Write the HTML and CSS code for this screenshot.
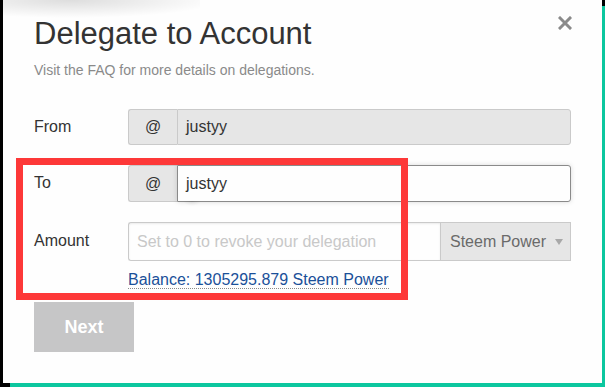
FILE: index.html
```html
<!DOCTYPE html>
<html>
<head>
<meta charset="utf-8">
<link rel="stylesheet" href="styles.css">
</head>
<body>
<div class="screen">
  <div class="modal">
    <div class="top-shade"></div>
    <div class="header">
      <h2 class="title">Delegate to Account</h2>
      <button class="close" aria-label="Close">
        <svg width="14" height="14" viewBox="0 0 14 14"><path d="M2 2 L12 12 M12 2 L2 12" stroke="#8a8a8a" stroke-width="3" stroke-linecap="square"/></svg>
      </button>
    </div>
    <p class="subtitle">Visit the FAQ for more details on delegations.</p>

    <div class="form">
      <div class="row">
        <div class="label">From</div>
        <div class="group">
          <span class="addon">@</span>
          <span class="field disabled">justyy</span>
        </div>
      </div>
      <div class="row">
        <div class="label">To</div>
        <div class="group">
          <span class="addon">@</span>
          <span class="field focused">justyy</span>
          <span class="tip-shadow"></span>
        </div>
      </div>
      <div class="row row-amount">
        <div class="label">Amount</div>
        <div class="group">
          <span class="field amount placeholder">Set to 0 to revoke your delegation</span>
          <span class="select">Steem Power <span class="caret"></span></span>
        </div>
      </div>
      <div class="balance-row">
        <a class="balance">Balance: 1305295.879 Steem Power</a>
      </div>
      <button class="next">Next</button>
    </div>

    <div class="highlight"></div>
  </div>
</div>
</body>
</html>
```

FILE: styles.css
```css
* { box-sizing: border-box; }
html, body { margin: 0; padding: 0; }
body {
  font-family: "Liberation Sans", Arial, sans-serif;
  background: #000;
}
.screen {
  width: 605px;
  height: 387px;
  background: linear-gradient(#0cc79f, #0cc79f) 10px 6px / 595px 381px no-repeat, #000;
  overflow: hidden;
}
.modal {
  position: relative;
  margin: 0 3px 0 3px;
  height: 383px;
  background: #fefefe;
  padding: 15px 31px 0 31px;
}
.top-shade {
  position: absolute;
  left: -3px;
  top: 0;
  width: 200px;
  height: 22px;
  background: radial-gradient(ellipse 150px 18px at 70px 0, rgba(0,0,0,0.13), rgba(0,0,0,0) 100%);
  pointer-events: none;
}
.header {
  display: flex;
  justify-content: space-between;
  align-items: flex-start;
}
.title {
  margin: 0;
  font-weight: normal;
  font-size: 31px;
  line-height: 37px;
  color: #333;
}
.close {
  border: 0;
  background: none;
  padding: 0;
  margin: 1px -1px 0 0;
  width: 14px;
  height: 14px;
  display: block;
}
.close svg { display: block; }
.subtitle {
  margin: 8px 0 0 0;
  font-size: 14px;
  line-height: 20px;
  color: #8a8a8a;
}
.form {
  margin-top: 29px;
  display: flex;
  flex-direction: column;
}
.row {
  display: flex;
  align-items: center;
  height: 36px;
  margin-bottom: 20px;
}
.row + .row { height: 37px; }
.row-amount { height: 39px !important; margin-bottom: 0; }
.label {
  width: 94px;
  font-size: 16px;
  color: #333;
  margin-top: -1px;
}
.group {
  position: relative;
  flex: 1;
  display: flex;
  height: 100%;
}
.addon {
  width: 49px;
  flex: none;
  background: #e6e6e6;
  border: 1px solid #cacaca;
  border-right: 0;
  border-radius: 3px 0 0 3px;
  display: flex;
  align-items: center;
  justify-content: center;
  font-size: 16px;
  color: #333;
}
.field {
  flex: 1;
  display: flex;
  align-items: center;
  padding: 0 8px;
  font-size: 16px;
  color: #333;
  border: 1px solid #cacaca;
  border-radius: 0 3px 3px 0;
  background: #fefefe;
}
.field.disabled {
  background: #e6e6e6;
}
.field.focused {
  border-color: #8a8a8a;
  box-shadow: 0 0 5px rgba(0,0,0,0.15);
}
.field.amount {
  border-radius: 3px 0 0 3px;
  border-right: 0;
  box-shadow: inset 0 1px 2px rgba(10,10,10,0.08);
}
.placeholder { color: #c8c8c8; }
.select {
  width: 131px;
  flex: none;
  display: flex;
  align-items: center;
  padding: 0 0 0 9px;
  background: #e6e6e6;
  border: 1px solid #cacaca;
  font-size: 16px;
  color: #6a6a6a;
}
.caret {
  margin-left: 9px;
  width: 0;
  height: 0;
  border-left: 4px solid transparent;
  border-right: 4px solid transparent;
  border-top: 6px solid #a8a8a8;
}
.tip-shadow {
  position: absolute;
  left: 55px;
  top: 36px;
  width: 18px;
  height: 10px;
  background: radial-gradient(ellipse 9px 5px at 50% 0, rgba(0,0,0,0.08), rgba(0,0,0,0));
}
.balance-row {
  margin-top: 9px;
  padding-left: 94px;
  font-size: 16px;
  line-height: 20px;
}
.balance {
  color: #1a5099;
  text-decoration: none;
  border-bottom: 1px dotted #8a8a8a;
}
.next {
  margin-top: 12px;
  width: 100px;
  height: 50px;
  border: 0;
  background: #c6c6c7;
  color: #fff;
  font-family: "Liberation Sans", Arial, sans-serif;
  font-weight: bold;
  font-size: 18px;
  padding: 0;
}
.highlight {
  position: absolute;
  left: 13px;
  top: 158px;
  width: 392px;
  height: 142px;
  border: 7px solid #fd3838;
  pointer-events: none;
}
```
